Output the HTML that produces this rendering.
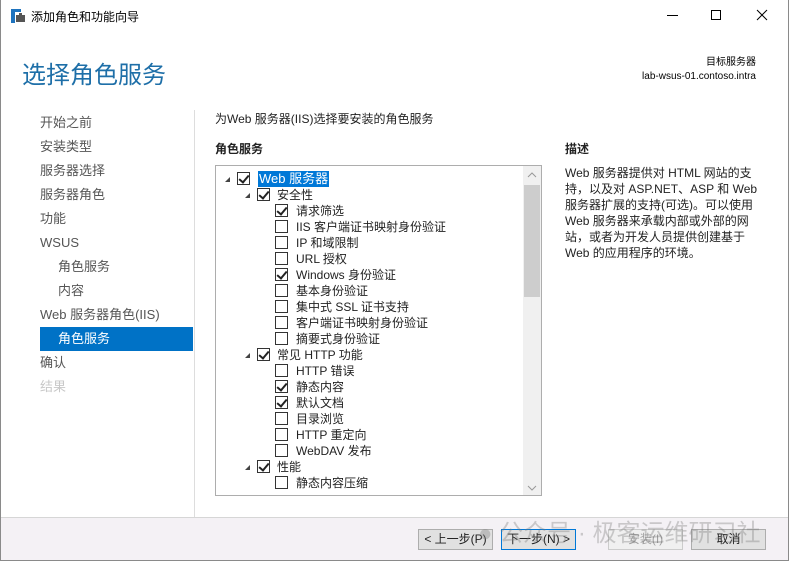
<!DOCTYPE html>
<html><head><meta charset="utf-8"><style>
*{margin:0;padding:0;box-sizing:border-box}
body{width:790px;height:563px;background:#fff;font-family:"Liberation Sans","Noto Sans CJK SC",sans-serif;font-size:12px;color:#222;position:relative;overflow:hidden}
.a{position:absolute;white-space:nowrap}
.win{position:absolute;left:0;top:0;width:789px;height:561px;border:1px solid #8a8a8a;border-top:none}
.nav{position:absolute;left:40px;font-size:13px;color:#555;line-height:16px}
.row{position:absolute;height:16px;line-height:16px;font-size:12px;color:#222}
.cb{position:absolute;width:13px;height:13px;border:1px solid #333;background:#fff;top:1px}
.cb.c::after{content:"";position:absolute;left:3px;top:0px;width:4px;height:8px;border-right:2px solid #222;border-bottom:2px solid #222;transform:rotate(40deg)}
.ar{position:absolute;width:0;height:0;border-left:5px solid transparent;border-bottom:5px solid #444;top:6px}
.btn{position:absolute;top:529px;width:75px;height:21px;border:1px solid #adadad;background:#e1e1e1;font-size:12px;text-align:center;line-height:19px}
.d{font-size:12px;line-height:16px}
</style></head><body>
<div class="win"></div>
<!-- title bar -->
<svg class="a" style="left:10px;top:9px" width="16" height="15"><rect x="1" y="0" width="4" height="14" fill="#1e73be"/><rect x="5" y="0" width="6" height="3" fill="#1e73be"/><rect x="6" y="6" width="9" height="7" fill="#555"/><rect x="9" y="4" width="3" height="2" fill="#555"/></svg>
<div class="a" style="left:31px;top:8px;font-size:12px;color:#000">添加角色和功能向导</div>
<div class="a" style="left:667px;top:15px;width:11px;height:1px;background:#000"></div>
<div class="a" style="left:711px;top:10px;width:10px;height:10px;border:1px solid #000"></div>
<svg class="a" style="left:756px;top:9px" width="12" height="12"><path d="M1 1L11 11M11 1L1 11" stroke="#000" stroke-width="1"/></svg>
<div class="a" style="left:22px;top:55px;font-size:24px;color:#1e6fa8">选择角色服务</div>
<div class="a" style="right:34px;top:56px;font-size:10px;color:#000;text-align:right;line-height:14px">目标服务器<br>lab-wsus-01.contoso.intra</div>
<!-- nav -->
<div class="nav" style="top:115px">开始之前</div>
<div class="nav" style="top:139px">安装类型</div>
<div class="nav" style="top:163px">服务器选择</div>
<div class="nav" style="top:187px">服务器角色</div>
<div class="nav" style="top:211px">功能</div>
<div class="nav" style="top:235px">WSUS</div>
<div class="nav" style="top:259px;left:58px">角色服务</div>
<div class="nav" style="top:283px;left:58px">内容</div>
<div class="nav" style="top:307px">Web 服务器角色(IIS)</div>
<div class="a" style="left:40px;top:327px;width:153px;height:24px;background:#0072c6"></div>
<div class="nav" style="top:331px;left:58px;color:#fff">角色服务</div>
<div class="nav" style="top:355px">确认</div>
<div class="nav" style="top:379px;color:#c8c8c8">结果</div>
<div class="a" style="left:194px;top:110px;width:1px;height:407px;background:#ddd"></div>
<!-- main -->
<div class="a" style="left:215px;top:110px;font-size:12px;color:#222">为Web 服务器(IIS)选择要安装的角色服务</div>
<div class="a" style="left:215px;top:140px;font-size:12px;font-weight:bold;color:#222">角色服务</div>
<div class="a" style="left:565px;top:140px;font-size:12px;font-weight:bold;color:#222">描述</div>
<div class="a d" style="left:565px;top:165px">Web 服务器提供对 HTML 网站的支<br>持，以及对 ASP.NET、ASP 和 Web<br>服务器扩展的支持(可选)。可以使用<br>Web 服务器来承载内部或外部的网<br>站，或者为开发人员提供创建基于<br>Web 的应用程序的环境。</div>
<div class="a" style="left:215px;top:165px;width:327px;height:331px;border:1px solid #adadad;overflow:hidden">
 <div class="a" style="left:307px;top:0;width:18px;height:329px;background:#f0f0f0"></div>
 <div class="a" style="left:308px;top:19px;width:16px;height:112px;background:#cdcdcd"></div>
 <svg class="a" style="left:311px;top:6px" width="10" height="6"><path d="M1 5L5 1L9 5" stroke="#999" fill="none"/></svg>
 <svg class="a" style="left:311px;top:319px" width="10" height="6"><path d="M1 1L5 5L9 1" stroke="#999" fill="none"/></svg>
 <div id="t"></div>
</div>
<script>
var rows=[[0,1,1,'Web 服务器'],[1,1,1,'安全性'],[2,0,1,'请求筛选'],[2,0,0,'IIS 客户端证书映射身份验证'],[2,0,0,'IP 和域限制'],[2,0,0,'URL 授权'],[2,0,1,'Windows 身份验证'],[2,0,0,'基本身份验证'],[2,0,0,'集中式 SSL 证书支持'],[2,0,0,'客户端证书映射身份验证'],[2,0,0,'摘要式身份验证'],[1,1,1,'常见 HTTP 功能'],[2,0,0,'HTTP 错误'],[2,0,1,'静态内容'],[2,0,1,'默认文档'],[2,0,0,'目录浏览'],[2,0,0,'HTTP 重定向'],[2,0,0,'WebDAV 发布'],[1,1,1,'性能'],[2,0,0,'静态内容压缩']];
var h='';rows.forEach(function(r,i){var y=5+i*16,l=r[0];var cx=[21,41,59][l],tx=[42,61,80][l];
if(r[1])h+='<div class="ar" style="left:'+(cx-12)+'px;top:'+(y+6)+'px"></div>';
h+='<div class="cb'+(r[2]?' c':'')+'" style="left:'+cx+'px;top:'+(y+1)+'px"></div>';
h+='<div class="row" style="left:'+tx+'px;top:'+y+'px;'+(i==0?'background:#0078d7;color:#fff;padding:0 1px;font-size:13px':'')+(l<2&&i>0?'font-size:12px':'')+'">'+r[3]+'</div>';});
document.getElementById('t').innerHTML=h;
</script>
<!-- footer -->
<div class="a" style="left:1px;top:517px;width:787px;height:1px;background:#d6d6d6"></div>
<div class="a" style="left:1px;top:518px;width:787px;height:42px;background:#f4f1f5"></div>
<div class="btn" style="left:418px">&lt; 上一步(P)</div>
<div class="btn" style="left:501px;border-color:#0078d7">下一步(N) &gt;</div>
<div class="btn" style="left:608px;color:#a0a0a0;background:#f0f0f0;border-color:#ccc">安装(I)</div>
<div class="btn" style="left:691px">取消</div>
<div class="a" style="left:478px;top:513px;font-size:24px;color:rgba(120,120,120,0.35)">● 公众号 · 极客运维研习社</div>
</body></html>
